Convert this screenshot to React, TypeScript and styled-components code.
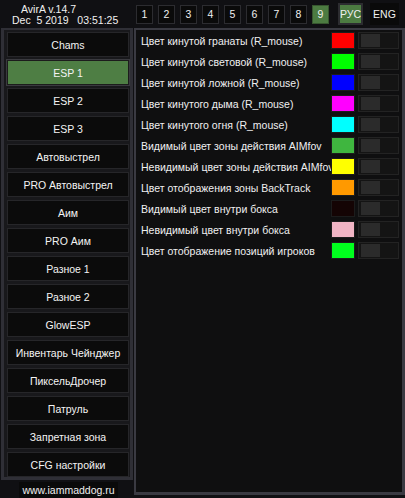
import styled, { createGlobalStyle } from 'styled-components';

const GlobalStyle = createGlobalStyle`
  html, body {
    margin: 0;
    padding: 0;
    background: #0d0d0f;
  }
  * {
    box-sizing: border-box;
  }
`;

const Window = styled.div`
  width: 405px;
  height: 498px;
  background: #101013;
  color: #f0f0f0;
  font-family: "Liberation Sans", Arial, sans-serif;
  font-size: 10.5px;
  display: grid;
  grid-template-columns: 133px minmax(0, 1fr);
  grid-template-rows: 28px 1fr;
  overflow: hidden;
`;

const Info = styled.div`
  display: flex;
  flex-direction: column;
  justify-content: center;
  line-height: 11px;
  padding-top: 2px;
  white-space: pre;
`;

const InfoLine = styled.span<{ $indent: number }>`
  padding-left: ${p => p.$indent}px;
`;

const TabBar = styled.div`
  display: flex;
  align-items: center;
  padding-left: 3px;
  gap: 5px;
`;

const NumTab = styled.div<{ $active?: boolean }>`
  width: 17px;
  height: 19px;
  display: flex;
  align-items: center;
  justify-content: center;
  background: ${p => (p.$active ? '#4c7b41' : '#0a0a0a')};
  border: 1px solid ${p => (p.$active ? '#37562f' : '#2c2c30')};
`;

const LangTab = styled.div<{ $active?: boolean }>`
  width: ${p => (p.$active ? '25px' : '29px')};
  height: 22px;
  display: flex;
  align-items: center;
  justify-content: center;
  background: ${p => (p.$active ? '#4c7b41' : '#0a0a0a')};
  border: 2px solid ${p => (p.$active ? '#2c2c30' : '#0a0a0a')};
  margin-left: ${p => (p.$active ? '4px' : '2px')};
`;

const LeftCol = styled.div`
  display: flex;
  flex-direction: column;
  align-items: stretch;
`;

const Sidebar = styled.div`
  margin-left: 1px;
  height: 452px;
  background: #18181b;
  border: 3px solid #2f2f36;
  border-top-width: 2px;
  padding: 2px 1px 0 3px;
  display: flex;
  flex-direction: column;
  gap: 3px;
`;

const NavButton = styled.div<{ $active?: boolean }>`
  height: 25px;
  flex: none;
  display: flex;
  align-items: center;
  justify-content: center;
  background: ${p => (p.$active ? '#4e7e44' : '#0b0b0b')};
  border: 1px solid ${p => (p.$active ? '#1c1c1c' : '#262629')};
  outline: ${p => (p.$active ? '1px solid #3a3a3f' : 'none')};
  color: #f4f4f4;
`;

const Site = styled.div`
  align-self: center;
  margin-top: 2px;
  padding: 2px 3px;
  background: #0a0a0a;
  line-height: 12px;
  margin-left: 4px;
`;

const Content = styled.div`
  margin: 0 0 3px 1px;
  background: #0f0f10;
  border: 2px solid #3a3a42;
  border-right-width: 3px;
  border-bottom-width: 3px;
  padding: 2px 3px 0 5px;
  display: flex;
  flex-direction: column;
  gap: 4px;
`;

const Row = styled.div`
  display: flex;
  align-items: center;
  height: 17px;
`;

const Label = styled.span`
  flex: 1;
  min-width: 0;
  white-space: nowrap;
`;

const Swatch = styled.div<{ $color: string }>`
  width: 24px;
  height: 17px;
  flex: none;
  background: ${p => p.$color};
  border: 1px solid #1c1c1c;
  margin-right: 3px;
`;

const Toggle = styled.div`
  width: 41px;
  height: 17px;
  flex: none;
  background: #141414;
  border: 1px solid #232323;
  padding: 1px 2px;
  display: flex;
`;

const Thumb = styled.div`
  width: 19px;
  background: #2b2b2b;
`;

const menu = [
  'Chams',
  'ESP 1',
  'ESP 2',
  'ESP 3',
  'Автовыстрел',
  'PRO Автовыстрел',
  'Аим',
  'PRO Аим',
  'Разное 1',
  'Разное 2',
  'GlowESP',
  'Инвентарь Чейнджер',
  'ПиксельДрочер',
  'Патруль',
  'Запретная зона',
  'CFG настройки',
];

const colors = [
  { label: 'Цвет кинутой гранаты (R_mouse)', color: '#ff0000' },
  { label: 'Цвет кинутой световой (R_mouse)', color: '#00ff00' },
  { label: 'Цвет кинутой ложной (R_mouse)', color: '#0000ff' },
  { label: 'Цвет кинутого дыма (R_mouse)', color: '#ff00ff' },
  { label: 'Цвет кинутого огня (R_mouse)', color: '#00ffff' },
  { label: 'Видимый цвет зоны действия AIMfov', color: '#3fb63f' },
  { label: 'Невидимый цвет зоны действия AIMfov', color: '#ffff00' },
  { label: 'Цвет отображения зоны BackTrack', color: '#ff9900' },
  { label: 'Видимый цвет внутри бокса', color: '#140404' },
  { label: 'Невидимый цвет внутри бокса', color: '#f0b4c4' },
  { label: 'Цвет отображение позиций игроков', color: '#00ff1e' },
];

export default function App() {
  return (
    <>
      <GlobalStyle />
      <Window>
        <Info>
          <InfoLine $indent={21}>AvirA v.14.7</InfoLine>
          <InfoLine $indent={12}>{'Dec  5 2019   03:51:25'}</InfoLine>
        </Info>
        <TabBar>
          {[1, 2, 3, 4, 5, 6, 7, 8, 9].map(n => (
            <NumTab key={n} $active={n === 9}>{n}</NumTab>
          ))}
          <LangTab $active>РУС</LangTab>
          <LangTab>ENG</LangTab>
        </TabBar>
        <LeftCol>
          <Sidebar>
            {menu.map(m => (
              <NavButton key={m} $active={m === 'ESP 1'}>{m}</NavButton>
            ))}
          </Sidebar>
          <Site>www.iammaddog.ru</Site>
        </LeftCol>
        <Content>
          {colors.map(c => (
            <Row key={c.label}>
              <Label>{c.label}</Label>
              <Swatch $color={c.color} />
              <Toggle>
                <Thumb />
              </Toggle>
            </Row>
          ))}
        </Content>
      </Window>
    </>
  );
}
